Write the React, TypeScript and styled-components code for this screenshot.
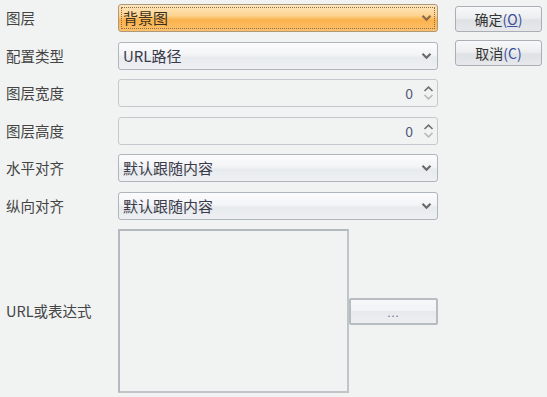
import { Fragment } from "react";
import styled, { createGlobalStyle } from "styled-components";

const GlobalStyle = createGlobalStyle`
  html, body {
    margin: 0;
    padding: 0;
    background: #f1f3f2;
  }
  body {
    font-family: "Noto Sans CJK SC", "Liberation Sans", sans-serif;
    color: #333;
  }
`;

const Page = styled.div`
  display: flex;
  align-items: flex-start;
  gap: 17px;
  padding: 4px 0 0 6px;
  width: 547px;
  height: 397px;
  box-sizing: border-box;
`;

const Form = styled.div`
  display: grid;
  grid-template-columns: 112px 320px;
  grid-template-rows: repeat(6, 28px) 164px;
  row-gap: 9.5px;
  align-items: center;
`;

const Label = styled.div`
  font-size: 14.5px;
  line-height: 20px;
  color: #444;
  white-space: nowrap;
`;

const Combo = styled.div<{ $focused?: boolean }>`
  position: relative;
  height: 28px;
  box-sizing: border-box;
  border: 1px solid ${(p) => (p.$focused ? "#b09878" : "#adb5bd")};
  border-radius: 3px;
  background: ${(p) =>
    p.$focused
      ? "linear-gradient(#fee6bf 0%, #fdd491 40%, #fbb24d 58%, #fcc06b 100%)"
      : "linear-gradient(#fcfcfd 0%, #f3f4f6 45%, #e8ebee 55%, #eef0f2 100%)"};
  display: flex;
  align-items: center;
  padding: 0 4px;
  font-size: 15px;
  color: ${(p) => (p.$focused ? "#3a3020" : "#3a3a4a")};
  &::after {
    content: "";
    display: ${(p) => (p.$focused ? "block" : "none")};
    position: absolute;
    inset: 2px;
    border: 1px dotted #8a6a48;
    border-radius: 1px;
  }
`;

const ComboText = styled.span`
  flex: 1;
  line-height: 20px;
`;

const Chevron = styled.svg`
  width: 11px;
  height: 8px;
  margin-right: 1px;
  flex: none;
`;

const Spin = styled.div`
  height: 28px;
  box-sizing: border-box;
  border: 1px solid #c3c9cf;
  border-radius: 3px;
  background: #f1f3f2;
  display: flex;
  align-items: center;
  justify-content: flex-end;
  padding-right: 3px;
  gap: 10px;
  font-size: 14px;
  color: #555a7a;
`;

const SpinArrows = styled.div`
  display: flex;
  flex-direction: column;
  gap: 2px;
`;

const UrlCell = styled.div`
  display: flex;
  align-items: center;
  height: 164px;
`;

const TextBox = styled.div`
  width: 231px;
  height: 164px;
  box-sizing: border-box;
  border: 2px solid #c0c5ca;
  border-top-color: #b3b9be;
  border-left-color: #b3b9be;
  background: #f1f3f2;
  flex: none;
`;

const DotsButton = styled.div`
  width: 89px;
  height: 27px;
  box-sizing: border-box;
  border: 2px solid #b6bcc2;
  border-radius: 2px;
  background: linear-gradient(#f6f7f8 0%, #f2f3f5 50%, #e7e9ec 50%, #eceef0 100%);
  display: flex;
  align-items: center;
  justify-content: center;
  font-size: 11px;
  color: #6a7090;
  letter-spacing: 1px;
  line-height: 1;
  padding-top: 2px;
`;

const Side = styled.div`
  display: flex;
  flex-direction: column;
  gap: 8px;
  padding-top: 2px;
`;

const Button = styled.div`
  width: 87px;
  height: 26px;
  box-sizing: border-box;
  border: 1px solid #a9afb5;
  border-radius: 3px;
  background: linear-gradient(#f7f8f9 0%, #eceef0 45%, #dfe2e5 55%, #e6e8eb 100%);
  display: flex;
  align-items: center;
  justify-content: center;
  font-size: 14px;
  color: #333;
`;

const Mnemonic = styled.span`
  color: #3b4f9a;
  u {
    text-decoration-thickness: 1px;
  }
`;

const Down = ({ color = "#6a6a6a" }: { color?: string }) => (
  <Chevron viewBox="0 0 11 8">
    <path d="M1.5 1.8 L5.5 5.8 L9.5 1.8" fill="none" stroke={color} strokeWidth="2.2" />
  </Chevron>
);

const SmallArrow = ({ up, color }: { up?: boolean; color: string }) => (
  <svg width="11" height="6" viewBox="0 0 11 6">
    <path
      d={up ? "M1.5 5 L5.5 1.2 L9.5 5" : "M1.5 1 L5.5 4.8 L9.5 1"}
      fill="none"
      stroke={color}
      strokeWidth="1.6"
    />
  </svg>
);

const rows: { label: string; kind: "combo" | "spin"; value: string; focused?: boolean }[] = [
  { label: "图层", kind: "combo", value: "背景图", focused: true },
  { label: "配置类型", kind: "combo", value: "URL路径" },
  { label: "图层宽度", kind: "spin", value: "0" },
  { label: "图层高度", kind: "spin", value: "0" },
  { label: "水平对齐", kind: "combo", value: "默认跟随内容" },
  { label: "纵向对齐", kind: "combo", value: "默认跟随内容" },
];

export default function App() {
  return (
    <>
      <GlobalStyle />
      <Page>
        <Form>
          {rows.map((r) => (
            <Fragment key={r.label}>
              <Label>{r.label}</Label>
              {r.kind === "combo" ? (
                <Combo $focused={r.focused}>
                  <ComboText>{r.value}</ComboText>
                  <Down color={r.focused ? "#8a6a48" : "#6a6a6a"} />
                </Combo>
              ) : (
                <Spin>
                  <span>{r.value}</span>
                  <SpinArrows>
                    <SmallArrow up color="#707070" />
                    <SmallArrow color="#b8b8b8" />
                  </SpinArrows>
                </Spin>
              )}
            </Fragment>
          ))}
          <Label>URL或表达式</Label>
          <UrlCell>
            <TextBox />
            <DotsButton>...</DotsButton>
          </UrlCell>
        </Form>
        <Side>
          <Button>
            确定<Mnemonic>(<u>O</u>)</Mnemonic>
          </Button>
          <Button>
            取消<Mnemonic>(C)</Mnemonic>
          </Button>
        </Side>
      </Page>
    </>
  );
}
